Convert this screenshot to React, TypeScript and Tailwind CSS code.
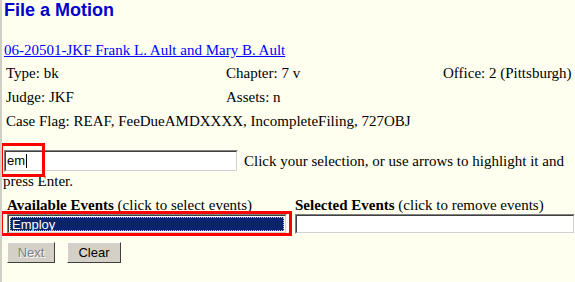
const serif = "font-['Liberation_Serif','Times_New_Roman',serif]";
const sans = "font-['Liberation_Sans',Arial,sans-serif]";

function InfoRow({ a, b, c }: { a: string; b?: string; c?: string }) {
  return (
    <div className="flex h-[24px] items-center pl-[2px] leading-[24px]">
      <div className="w-[220px]">{a}</div>
      {b && <div className="w-[217px]">{b}</div>}
      {c && <div>{c}</div>}
    </div>
  );
}

function RedBox({ className }: { className: string }) {
  return <div className={`pointer-events-none absolute border-[3px] border-[#ff0000] ${className}`} />;
}

export default function App() {
  return (
    <div className={`relative h-[282px] w-[575px] overflow-hidden border-l-2 border-[#cfcfc4] bg-[#fffff0] pl-[2px] text-[15px] text-black ${serif}`}>
      <h1 className={`h-[20px] text-[18px] font-bold leading-[20px] text-[#0000cc] ${sans}`}>File a Motion</h1>

      <div className="mt-[22px] leading-[17px]">
        <a href="#" className="text-[#0000ff] underline">
          06-20501-JKF Frank L. Ault and Mary B. Ault
        </a>
      </div>

      <div className="mt-[2px]">
        <InfoRow a="Type: bk" b="Chapter: 7 v" c="Office: 2 (Pittsburgh)" />
        <InfoRow a="Judge: JKF" b="Assets: n" />
        <div className="flex h-[24px] items-center pl-[2px] leading-[24px]">
          Case Flag: REAF, FeeDueAMDXXXX, IncompleteFiling, 727OBJ
        </div>
      </div>

      <div className="mt-[17px] flex h-[22px] items-center gap-[6px]">
        <div className="flex h-[22px] w-[234px] items-center border border-b-white border-l-[#808080] border-r-white border-t-[#808080] bg-white">
          <div className={`flex h-full w-full items-center border border-b-[#d4d0c8] border-l-[#404040] border-r-[#d4d0c8] border-t-[#404040] pl-[1px] text-[13px] ${sans}`}>
            em<span className="ml-[1px] h-[14px] w-px bg-black" />
          </div>
        </div>
        <span className="leading-[17px]">Click your selection, or use arrows to highlight it and</span>
      </div>
      <div className="ml-[-1px] mt-[1px] leading-[17px]">press Enter.</div>

      <div className="mt-[7px] flex">
        <div className="ml-[3px] w-[280px]">
          <div className="leading-[17px]">
            <b>Available Events</b> (click to select events)
          </div>
          <div className="h-[20px] border border-b-white border-l-[#808080] border-r-white border-t-[#808080]">
            <div className="h-full border border-b-[#d4d0c8] border-l-[#404040] border-r-[#d4d0c8] border-t-[#404040] bg-white p-px">
              <div className={`flex h-full items-center bg-[#0a246a] pl-[2px] text-[13px] leading-none text-white outline-1 outline-dotted outline-[#c8c8a0] -outline-offset-1 ${sans}`}>
                Employ
              </div>
            </div>
          </div>
        </div>
        <div className="ml-[8px] flex-1">
          <div className="leading-[17px]">
            <b>Selected Events</b> (click to remove events)
          </div>
          <div className="h-[20px] border border-b-white border-l-[#808080] border-r-white border-t-[#808080]">
            <div className="h-full border border-b-[#d4d0c8] border-l-[#404040] border-r-[#d4d0c8] border-t-[#404040] bg-white" />
          </div>
        </div>
      </div>

      <div className={`ml-[3px] mt-[8px] flex gap-[12px] text-[13px] ${sans}`}>
        <button
          type="button"
          disabled
          className="h-[21px] w-[48px] border border-b-[#404040] border-l-white border-r-[#404040] border-t-white bg-[#d4d0c8] text-[#808080] [text-shadow:1px_1px_0_#fff]"
        >
          Next
        </button>
        <button
          type="button"
          className="h-[21px] w-[54px] border border-b-[#404040] border-l-white border-r-[#404040] border-t-white bg-[#d4d0c8] text-black"
        >
          Clear
        </button>
      </div>

      <RedBox className="left-[-2px] top-[143px] h-[34px] w-[45px]" />
      <RedBox className="left-[-2px] top-[211px] h-[25px] w-[292px]" />
    </div>
  );
}
